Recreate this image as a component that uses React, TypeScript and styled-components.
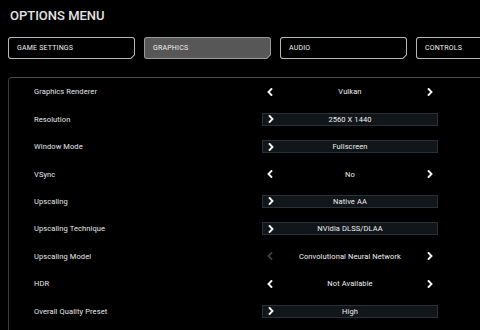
import { createGlobalStyle, styled } from "styled-components";

const GlobalStyle = createGlobalStyle`
  html, body {
    margin: 0;
    padding: 0;
    background: #000;
    overflow: hidden;
  }
  body {
    width: 480px;
    height: 330px;
    font-family: Roboto, "Liberation Sans", sans-serif;
    color: #e8e8e8;
  }
`;

const Screen = styled.div`
  width: 480px;
  height: 330px;
  overflow: hidden;
  background: #000;
`;

const Title = styled.h1`
  margin: 0;
  padding: 8px 0 0 10px;
  height: 16px;
  font-size: 13px;
  line-height: 15px;
  font-weight: 500;
  color: #e4e4e4;
`;

const Tabs = styled.div`
  display: flex;
  gap: 9px;
  padding: 13px 0 0 8px;
  width: 700px;
`;

const Tab = styled.div<{ $active?: boolean }>`
  flex: 0 0 127px;
  height: 22px;
  padding: 1px;
  box-sizing: border-box;
  border-radius: 3px;
  background: ${(p) => (p.$active ? "#9a9a9a" : "#b8b8b8")};
  clip-path: polygon(0 0, 100% 0, 100% calc(100% - 4px), calc(100% - 4px) 100%, 0 100%);
`;

const TabFace = styled.div<{ $active?: boolean }>`
  height: 100%;
  border-radius: 2px;
  background: ${(p) => (p.$active ? "#575757" : "#000")};
  clip-path: polygon(0 0, 100% 0, 100% calc(100% - 3.4px), calc(100% - 3.4px) 100%, 0 100%);
  display: flex;
  align-items: center;
  padding-left: 8px;
  font-size: 7px;
  font-weight: 400;
  letter-spacing: 0.2px;
  color: #f0f0f0;
`;

const Panel = styled.div`
  margin: 18px 0 0 8px;
  border-top: 1px solid #4c4c4c;
  border-left: 1px solid #3a3a3a;
  border-top-left-radius: 4px;
  height: 300px;
`;

const Row = styled.div`
  display: grid;
  grid-template-columns: 228px 176px;
  align-items: center;
  height: 27.45px;
  padding-left: 25px;
`;

const Label = styled.div`
  font-size: 7.5px;
  font-weight: 400;
  letter-spacing: 0.1px;
  color: #e8e8e8;
`;

const Cycler = styled.div`
  display: flex;
  align-items: center;
  justify-content: space-between;
  height: 13px;
  padding: 0 5px 0 5px;
`;

const Dropdown = styled.div`
  display: flex;
  align-items: center;
  height: 13px;
  box-sizing: border-box;
  background: #11161a;
  border: 1px solid #2a3136;
  padding-left: 5px;
`;

const Value = styled.span<{ $offset?: number }>`
  flex: 1;
  text-align: center;
  font-size: 7.5px;
  font-weight: 400;
  letter-spacing: 0.1px;
  color: #f0f0f0;
  margin-right: ${(p) => p.$offset ?? 0}px;
`;

const Chevron = ({ dir, dim }: { dir: "left" | "right"; dim?: boolean }) => (
  <svg width="6" height="8" viewBox="0 0 6 8" style={{ flex: "0 0 auto" }}>
    <path
      d={dir === "left" ? "M4.4 1 L1.5 4 L4.4 7" : "M1.6 1 L4.5 4 L1.6 7"}
      fill="none"
      stroke={dim ? "#3c3c3c" : "#f2f2f2"}
      strokeWidth="1.9"
      strokeLinecap="square"
    />
  </svg>
);

type Setting = {
  label: string;
  value: string;
  kind: "cycle" | "drop";
  leftDisabled?: boolean;
};

const settings: Setting[] = [
  { label: "Graphics Renderer", value: "Vulkan", kind: "cycle" },
  { label: "Resolution", value: "2560 X 1440", kind: "drop" },
  { label: "Window Mode", value: "Fullscreen", kind: "drop" },
  { label: "VSync", value: "No", kind: "cycle" },
  { label: "Upscaling", value: "Native AA", kind: "drop" },
  { label: "Upscaling Technique", value: "NVidia DLSS/DLAA", kind: "drop" },
  { label: "Upscaling Model", value: "Convolutional Neural Network", kind: "cycle", leftDisabled: true },
  { label: "HDR", value: "Not Available", kind: "cycle" },
  { label: "Overall Quality Preset", value: "High", kind: "drop" },
];

const tabs = ["GAME SETTINGS", "GRAPHICS", "AUDIO", "CONTROLS"];

export default function App() {
  return (
    <Screen>
      <GlobalStyle />
      <Title>OPTIONS MENU</Title>
      <Tabs>
        {tabs.map((t) => (
          <Tab key={t} $active={t === "GRAPHICS"}>
            <TabFace $active={t === "GRAPHICS"}>{t}</TabFace>
          </Tab>
        ))}
      </Tabs>
      <Panel>
        {settings.map((s) => (
          <Row key={s.label}>
            <Label>{s.label}</Label>
            {s.kind === "cycle" ? (
              <Cycler>
                <Chevron dir="left" dim={s.leftDisabled} />
                <Value>{s.value}</Value>
                <Chevron dir="right" />
              </Cycler>
            ) : (
              <Dropdown>
                <Chevron dir="right" />
                <Value $offset={11}>{s.value}</Value>
              </Dropdown>
            )}
          </Row>
        ))}
      </Panel>
    </Screen>
  );
}
